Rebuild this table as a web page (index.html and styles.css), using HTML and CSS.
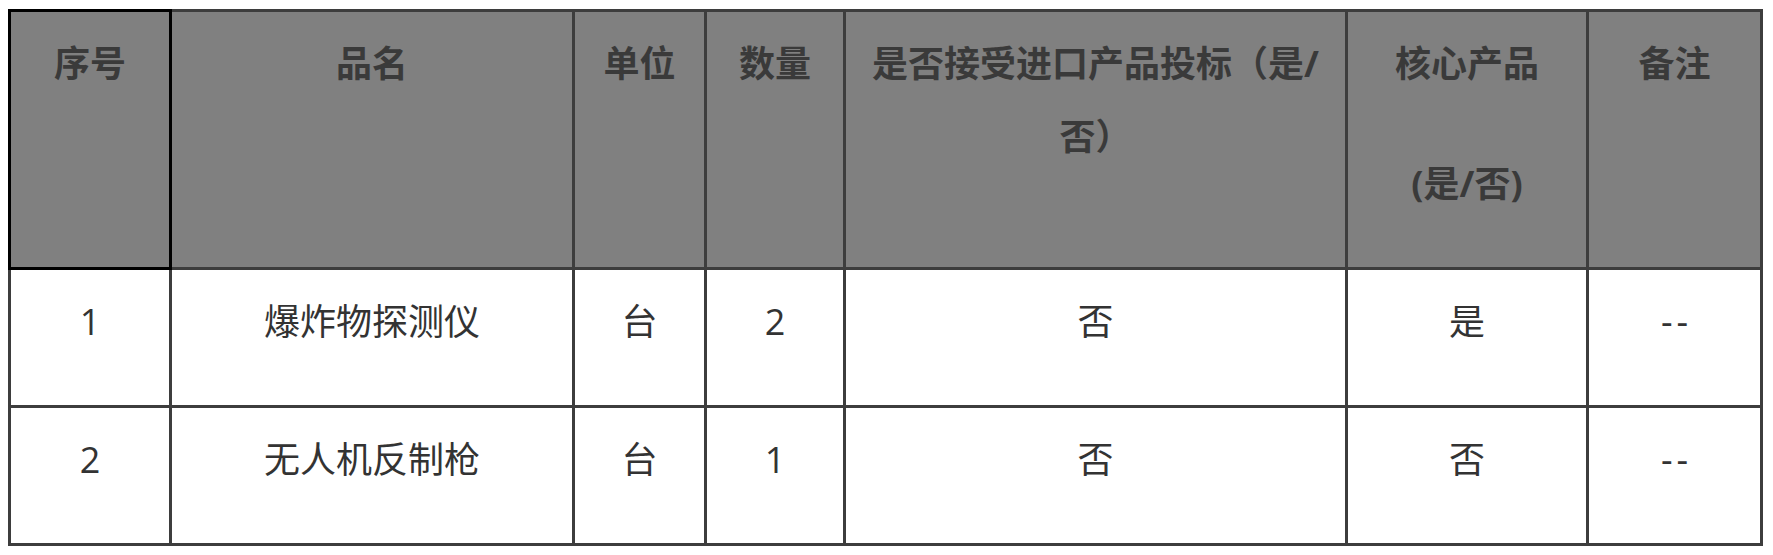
FILE: index.html
```html
<!DOCTYPE html>
<html lang="zh-CN">
<head>
<meta charset="utf-8">
<title>采购清单</title>
<link rel="stylesheet" href="styles.css">
</head>
<body>
<table class="goods">
  <colgroup>
    <col class="c-no">
    <col class="c-name">
    <col class="c-unit">
    <col class="c-qty">
    <col class="c-import">
    <col class="c-core">
    <col class="c-note">
  </colgroup>
  <thead>
    <tr>
      <th class="first"><p>序号</p></th>
      <th><p>品名</p></th>
      <th><p>单位</p></th>
      <th><p>数量</p></th>
      <th><p>是否接受进口产品投标（是/否）</p></th>
      <th><p>核心产品</p><p class="gap">(是/否)</p></th>
      <th><p>备注</p></th>
    </tr>
  </thead>
  <tbody>
    <tr>
      <td><p>1</p></td>
      <td><p>爆炸物探测仪</p></td>
      <td><p>台</p></td>
      <td><p>2</p></td>
      <td><p>否</p></td>
      <td><p>是</p></td>
      <td><p class="dash">--</p></td>
    </tr>
    <tr>
      <td><p>2</p></td>
      <td><p>无人机反制枪</p></td>
      <td><p>台</p></td>
      <td><p>1</p></td>
      <td><p>否</p></td>
      <td><p>否</p></td>
      <td><p class="dash">--</p></td>
    </tr>
  </tbody>
</table>
</body>
</html>
```

FILE: styles.css
```css
html, body {
  background: #ffffff;
}

body {
  margin: 9px 0 0 8px;
  font-family: "Open Sans", "Noto Sans CJK SC", sans-serif;
  font-size: 36px;
  color: #333333;
}

.goods {
  border-collapse: separate;
  border-spacing: 0;
  table-layout: fixed;
  width: 1755px;
}

.c-no { width: 164px; }
.c-name { width: 403px; }
.c-unit { width: 132px; }
.c-qty { width: 139px; }
.c-import { width: 502px; }
.c-core { width: 241px; }
.c-note { width: 174px; }

.goods th,
.goods td {
  box-sizing: border-box;
  vertical-align: top;
  text-align: center;
  padding: 15px 6px 0;
  line-height: 73px;
  border-right: 3px solid #3d3d3d;
  border-bottom: 3px solid #3d3d3d;
}

.goods th:first-child,
.goods td:first-child {
  border-left: 3px solid #3d3d3d;
}

.goods thead th {
  border-top: 3px solid #3d3d3d;
  background: #808080;
  color: #3a3a3a;
  font-weight: 700;
}

.goods thead th.first {
  border: 3px solid #000000;
}

.goods p {
  margin: 0 0 47px;
}

.goods p.gap {
  margin-top: 2px;
}

.goods p.dash {
  letter-spacing: 4px;
  text-indent: 4px;
}
```
